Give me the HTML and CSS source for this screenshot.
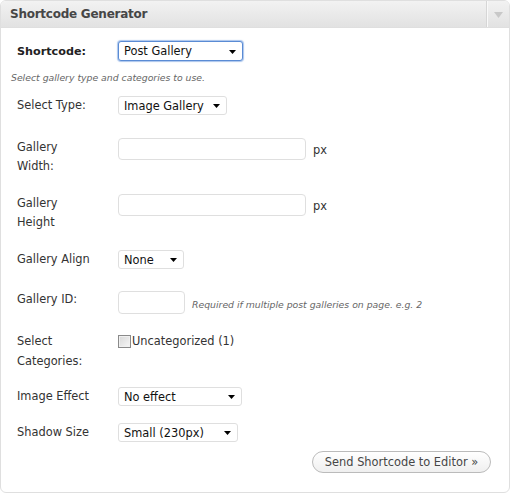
FILE: index.html
```html
<!DOCTYPE html>
<html>
<head>
<meta charset="utf-8">
<link rel="stylesheet" href="styles.css">
</head>
<body>
<div class="panel">
  <div class="panel-head">
    <h3 class="panel-title">Shortcode Generator</h3>
    <div class="toggle">
      <svg width="9" height="6" viewBox="0 0 9 6"><polygon points="0,0 9,0 4.5,6" fill="#c8c8c8"/></svg>
    </div>
  </div>
  <div class="panel-body">
    <div class="main-row">
      <span class="main-label">Shortcode:</span>
      <div class="select select-focus w-post"><span>Post Gallery</span><svg class="arrow" width="7" height="4" viewBox="0 0 7 4"><polygon points="0,0 7,0 3.5,4" fill="#000"/></svg></div>
    </div>
    <p class="desc">Select gallery type and categories to use.</p>
    <div class="form-grid">
      <span class="label">Select Type:</span>
      <div class="ctrl"><div class="select w-type"><span>Image Gallery</span><svg class="arrow" width="7" height="4" viewBox="0 0 7 4"><polygon points="0,0 7,0 3.5,4" fill="#000"/></svg></div></div>

      <span class="label two">Gallery<br>Width:</span>
      <div class="ctrl"><div class="input w-wide"></div><span class="unit">px</span></div>

      <span class="label two">Gallery<br>Height</span>
      <div class="ctrl"><div class="input w-wide"></div><span class="unit">px</span></div>

      <span class="label">Gallery Align</span>
      <div class="ctrl"><div class="select w-align"><span>None</span><svg class="arrow" width="7" height="4" viewBox="0 0 7 4"><polygon points="0,0 7,0 3.5,4" fill="#000"/></svg></div></div>

      <span class="label label-id">Gallery ID:</span>
      <div class="ctrl"><div class="input input-id"></div><span class="note">Required if multiple post galleries on page. e.g. 2</span></div>

      <span class="label two label-cat">Select<br>Categories:</span>
      <div class="ctrl ctrl-cat"><span class="checkbox"></span><span class="cat-text">Uncategorized (1)</span></div>

      <span class="label">Image Effect</span>
      <div class="ctrl"><div class="select w-effect"><span>No effect</span><svg class="arrow" width="7" height="4" viewBox="0 0 7 4"><polygon points="0,0 7,0 3.5,4" fill="#000"/></svg></div></div>

      <span class="label">Shadow Size</span>
      <div class="ctrl"><div class="select w-shadow"><span>Small (230px)</span><svg class="arrow" width="7" height="4" viewBox="0 0 7 4"><polygon points="0,0 7,0 3.5,4" fill="#000"/></svg></div></div>
    </div>
    <div class="actions">
      <button class="send-btn">Send Shortcode to Editor »</button>
    </div>
  </div>
</div>
</body>
</html>
```

FILE: styles.css
```css
html, body {
  margin: 0;
  padding: 0;
  background: #fff;
}
body {
  font-family: "DejaVu Sans", Verdana, sans-serif;
  font-size: 11.4px;
  color: #333;
}
.panel {
  width: 508px;
  height: 491px;
  border: 1px solid #dfdfdf;
  border-radius: 6px;
  overflow: hidden;
  background: #fff;
}
.panel-head {
  display: flex;
  height: 26px;
  background: linear-gradient(#f2f2f2, #e2e2e2);
  border-bottom: 1px solid #dfdfdf;
}
.panel-title {
  flex: 1;
  margin: 0;
  padding: 0 0 0 9px;
  font-size: 12px;
  letter-spacing: -0.25px;
  font-weight: bold;
  line-height: 27px;
  color: #464646;
}
.toggle {
  width: 21px;
  border-left: 1px solid #f9f9f9;
  box-shadow: -1px 0 0 #d6d6d6;
  display: flex;
  align-items: center;
  justify-content: center;
  padding-top: 1px;
}
.panel-body {
  padding: 13px 0 0 0;
}
.main-row {
  display: flex;
  align-items: center;
  padding-left: 16px;
  height: 20px;
}
.main-label {
  width: 101px;
  font-weight: bold;
  color: #222;
  font-size: 11.2px;
}
.select {
  box-sizing: border-box;
  height: 19px;
  border: 1px solid #dfdfdf;
  border-radius: 3px;
  background: #fff;
  display: flex;
  align-items: center;
  justify-content: space-between;
  padding: 0 6px 0 5px;
  color: #111;
}
.select-focus {
  height: 20px;
  border: 1px solid #5a8bd4;
  box-shadow: 0 0 1px 1px rgba(100, 150, 220, 0.55);
}
.arrow {
  display: block;
  margin-top: 1px;
}
.w-post { width: 125px; }
.w-type { width: 109px; }
.w-align { width: 66px; }
.w-effect { width: 124px; }
.w-shadow { width: 120px; }
.desc {
  margin: 10px 0 0 10px;
  font-size: 9.3px;
  line-height: 14px;
  font-style: italic;
  color: #666;
}
.form-grid {
  display: grid;
  grid-template-columns: 101px auto;
  grid-template-rows: 42px 56px 56px 41px 44px 52px 36px 29px;
  margin-top: 11px;
  padding-left: 16px;
}
.label {
  line-height: 19px;
  color: #333;
}
.label-cat {
  line-height: 20px;
  margin-top: -4px;
}
.label-id {
  margin-top: -1px;
}
.ctrl {
  display: flex;
  align-items: center;
  align-self: start;
}
.input {
  box-sizing: border-box;
  height: 22px;
  border: 1px solid #dfdfdf;
  border-radius: 4px;
  background: #fff;
}
.w-wide { width: 188px; }
.input-id { width: 67px; height: 23px; }
.unit {
  margin-left: 7px;
  color: #333;
  padding-top: 2px;
}
.note {
  margin-left: 7px;
  font-size: 9.3px;
  font-style: italic;
  color: #666;
  padding-top: 3px;
}
.checkbox {
  box-sizing: border-box;
  width: 13px;
  height: 13px;
  border: 1px solid #8a8a8a;
  background: linear-gradient(135deg, #d8d8d8, #f6f6f6);
  box-shadow: inset 0 0 0 1px #f0f0f0;
}
.cat-text {
  margin-left: 1px;
  color: #333;
  margin-top: -1px;
}
.actions {
  display: flex;
  justify-content: flex-end;
  padding-right: 18px;
  margin-top: -1px;
}
.send-btn {
  box-sizing: border-box;
  width: 179px;
  height: 22px;
  border: 1px solid #bbb;
  border-radius: 11px;
  background: linear-gradient(#ffffff, #efefef);
  font-family: "DejaVu Sans", Verdana, sans-serif;
  font-size: 11.4px;
  color: #464646;
  padding: 0;
}
```
